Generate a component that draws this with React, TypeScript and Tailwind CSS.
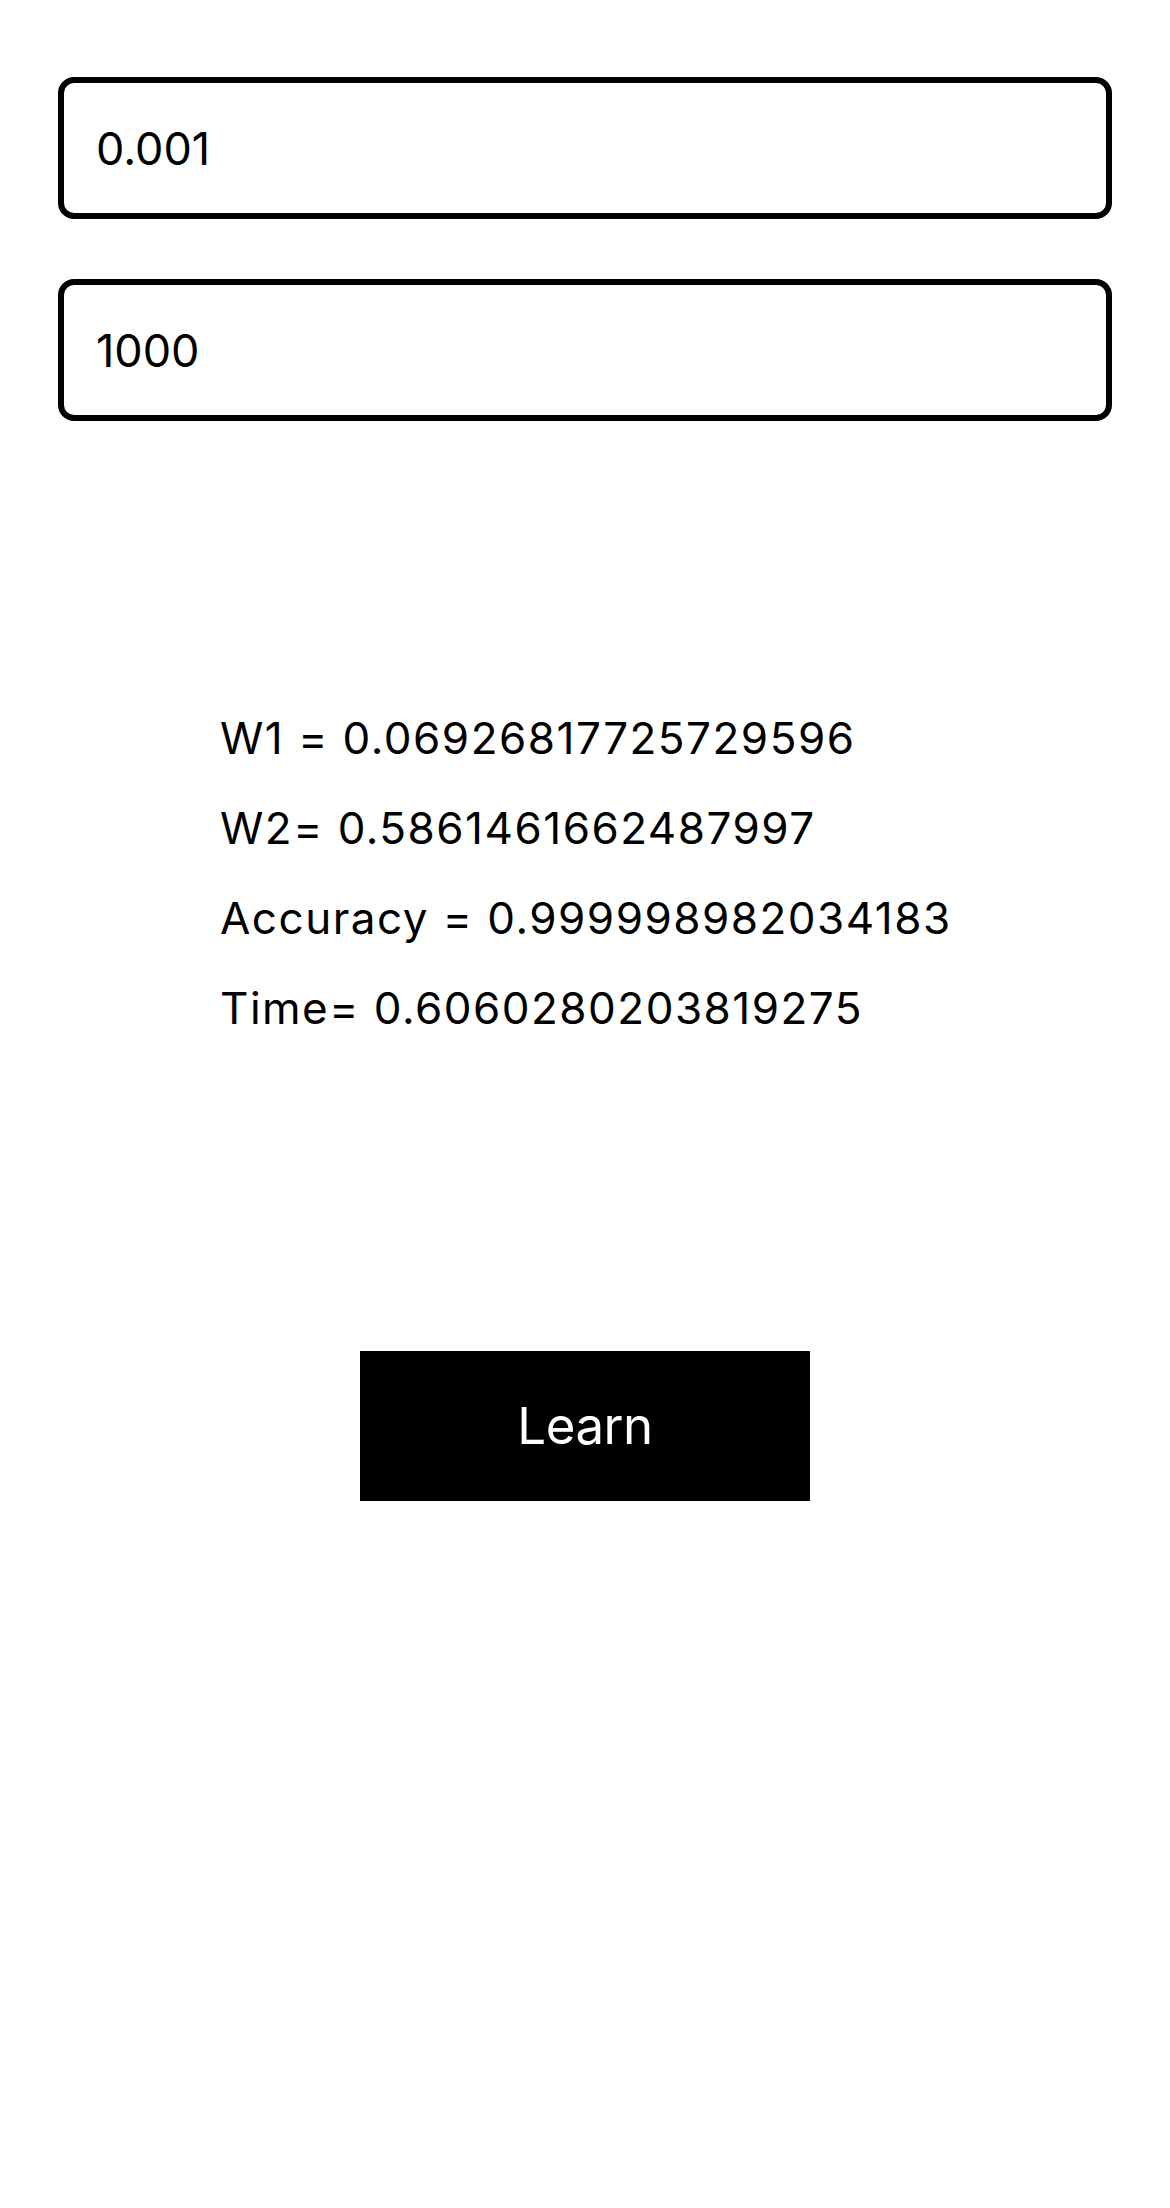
import React from 'react';

const results = [
  'W1 = 0.06926817725729596',
  'W2= 0.5861461662487997',
  'Accuracy = 0.999998982034183',
  'Time= 0.6060280203819275',
];

export default function App() {
  return (
    <div className="w-full h-[2208px] bg-white flex flex-col px-[58px] pt-[77px]">
      <input
        defaultValue="0.001"
        className="h-[142px] border-[6px] border-black rounded-[16px] px-[32px] text-[45px] text-black outline-none font-['Inter',sans-serif]"
      />
      <input
        defaultValue="1000"
        className="mt-[60px] h-[142px] border-[6px] border-black rounded-[16px] px-[32px] text-[45px] text-black outline-none font-['Inter',sans-serif]"
      />

      <div className="mt-[272px] ml-[162px] flex flex-col">
        {results.map((line) => (
          <div
            key={line}
            className="h-[90px] leading-[90px] text-[44px] tracking-[1.5px] text-black whitespace-nowrap font-['Inter',sans-serif]"
          >
            {line}
          </div>
        ))}
      </div>

      <button className="mt-[298px] self-center w-[450px] h-[150px] bg-black text-white text-[51px] tracking-[-0.5px] font-['Inter',sans-serif]">
        Learn
      </button>
    </div>
  );
}
